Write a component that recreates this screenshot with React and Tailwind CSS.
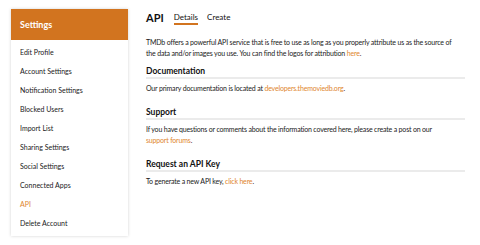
import React from "react";

const items = [
  "Edit Profile",
  "Account Settings",
  "Notification Settings",
  "Blocked Users",
  "Import List",
  "Sharing Settings",
  "Social Settings",
  "Connected Apps",
  "API",
  "Delete Account",
];

function Section({ title, first, children }) {
  return (
    <div className={first ? "mt-[7px]" : "mt-[13px]"}>
      <h3 className="text-[8.5px] font-bold leading-[10px] pb-[1px] border-b-[2px] border-[#ebebeb] text-[#111]">{title}</h3>
      <p className="mt-[4px] text-[7px] leading-[11px] tracking-[-0.18px] text-[#1a1a1a]">{children}</p>
    </div>
  );
}

export default function App() {
  return (
    <div className="w-[480px] h-[245px] bg-white flex pl-[11px] pt-[9px] font-['Lato',sans-serif]">
      <div className="w-[117px] h-[227px] bg-white shadow-[0_0_3px_rgba(0,0,0,0.18)] flex flex-col">
        <div className="h-[31px] bg-[#d2741f] flex items-center pl-[9px] text-white font-bold text-[9px]">Settings</div>
        <div className="flex flex-col pt-[3px]">
          {items.map((t) => (
            <div key={t} className={`h-[19px] flex items-center pl-[9px] text-[7px] ${t === "API" ? "text-[#e0862e]" : "text-[#1a1a1a]"}`}>{t}</div>
          ))}
        </div>
      </div>
      <div className="ml-[18px] w-[319px] flex flex-col">
        <div className="flex items-center h-[16px]">
          <span className="text-[11px] font-bold leading-none text-[#111]">API</span>
          <span className="ml-[10px] text-[8px] leading-none text-[#111] relative">Details<span className="absolute left-0 right-0 -bottom-[4px] h-[2px] bg-[#d2741f]"></span></span>
          <span className="ml-[9px] text-[8px] leading-none text-[#111]">Create</span>
        </div>
        <p className="mt-[12px] text-[7px] leading-[11px] tracking-[-0.18px] text-[#1a1a1a]">
          TMDb offers a powerful API service that is free to use as long as you properly attribute us as the source of<br />the data and/or images you use. You can find the logos for attribution <span className="text-[#e0862e]">here</span>.
        </p>
        <Section title="Documentation" first>
          Our primary documentation is located at <span className="text-[#e0862e]">developers.themoviedb.org</span>.
        </Section>
        <Section title="Support">
          If you have questions or comments about the information covered here, please create a post on our<br /><span className="text-[#e0862e]">support forums</span>.
        </Section>
        <Section title="Request an API Key">
          To generate a new API key, <span className="text-[#e0862e]">click here</span>.
        </Section>
      </div>
    </div>
  );
}
